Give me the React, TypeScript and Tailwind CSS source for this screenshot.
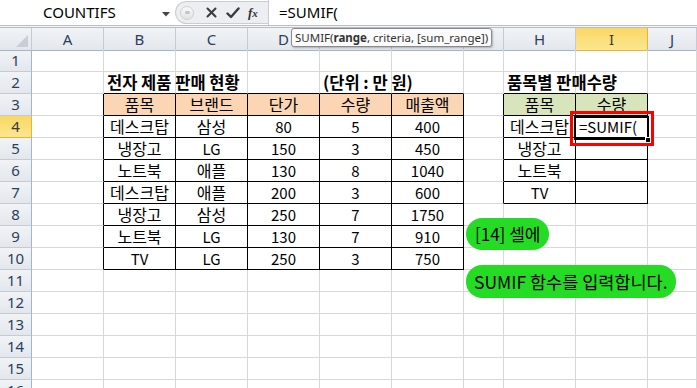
import React from "react";

const FONT = { fontFamily: '"Noto Sans", "Noto Sans CJK KR", sans-serif' };
const KFONT = { fontFamily: '"Noto Sans CJK KR", "Noto Sans", sans-serif' };

const colLetters = ["A", "B", "C", "D", "E", "F", "G", "H", "I", "J"];

type CellData = { text: string; bold?: boolean; align?: "left" | "center"; bg?: string };

const data: Record<string, CellData> = {};
const put = (ref: string, text: string, extra: Partial<CellData> = {}) => {
  data[ref] = { text, align: "center", ...extra };
};

put("B2", "전자 제품 판매 현황", { bold: true, align: "left" });
put("E2", "(단위 : 만 원)", { bold: true, align: "left" });
put("H2", "품목별 판매수량", { bold: true, align: "left" });
const head1 = ["품목", "브랜드", "단가", "수량", "매출액"];
["B", "C", "D", "E", "F"].forEach((c, i) => put(c + "3", head1[i], { bg: "peach" }));
const rows1 = [
  ["데스크탑", "삼성", "80", "5", "400"],
  ["냉장고", "LG", "150", "3", "450"],
  ["노트북", "애플", "130", "8", "1040"],
  ["데스크탑", "애플", "200", "3", "600"],
  ["냉장고", "삼성", "250", "7", "1750"],
  ["노트북", "LG", "130", "7", "910"],
  ["TV", "LG", "250", "3", "750"],
];
rows1.forEach((r, ri) => ["B", "C", "D", "E", "F"].forEach((c, i) => put(c + (ri + 4), r[i])));
put("H3", "품목", { bg: "green" });
put("I3", "수량", { bg: "green" });
["데스크탑", "냉장고", "노트북", "TV"].forEach((t, i) => put("H" + (i + 4), t));
put("I4", "=SUMIF(", { align: "left" });

function inRange(r: number, c: number) {
  if (r >= 3 && r <= 10 && c >= 2 && c <= 6) return true;
  if (r >= 3 && r <= 7 && c >= 8 && c <= 9) return true;
  return false;
}

const hasHangul = (s: string) => /[\uac00-\ud7a3]/.test(s);

function Cell({ r, c }: { r: number; c: number }) {
  const ref = colLetters[c - 1] + r;
  const d = data[ref];
  const rb = inRange(r, c) || inRange(r, c + 1);
  const bb = inRange(r, c) || inRange(r + 1, c);
  const bg = d?.bg === "peach" ? "bg-[#fcd5b4]" : d?.bg === "green" ? "bg-[#d8e4bc]" : "";
  let size = "text-[15px] ";
  if (d) {
    if (d.bold) size = "text-[16.5px] ";
    else if (hasHangul(d.text)) size = "text-[16px] ";
  }
  return (
    <div
      className={
        "relative border-r border-b box-border " +
        (rb ? "border-r-black " : "border-r-[#d8d8d8] ") +
        (bb ? "border-b-black " : "border-b-[#d8d8d8] ") +
        bg
      }
    >
      {d && (
        <div
          className={
            "absolute inset-0 whitespace-nowrap leading-[21px] text-black z-10 " +
            size +
            (d.align === "left" ? "text-left pl-[3px] " : "text-center ") +
            (d.bold ? "font-bold" : "")
          }
          style={KFONT}
        >
          {d.text}
        </div>
      )}
    </div>
  );
}

function RowHeader({ r }: { r: number }) {
  const active = r === 4;
  return (
    <div
      className={
        "border-r border-b box-border text-center text-[15px] leading-[21px] " +
        (active
          ? "bg-gradient-to-b from-[#f9d763] to-[#fde68e] border-r-[#e9b23e] border-b-[#e9b23e] text-[#3a3a3a]"
          : "bg-gradient-to-b from-[#f1f3f6] to-[#e3e7ec] border-r-[#9eb6ce] border-b-[#c5cbd3] text-[#2b3f5c]")
      }
      style={FONT}
    >
      {r}
    </div>
  );
}

export default function App() {
  const rows = Array.from({ length: 16 }, (_, i) => i + 1);
  return (
    <div className="relative w-[697px] h-[388px] overflow-hidden bg-white" style={FONT}>
      {/* formula bar */}
      <div className="flex h-[25px] bg-white">
        <div className="relative w-[175px] flex items-center">
          <span className="ml-[43px] text-[15px] text-black" style={FONT}>
            COUNTIFS
          </span>
          <svg className="absolute left-[162px] top-[12px]" width="8" height="5" viewBox="0 0 8 5">
            <path d="M0 0 L8 0 L4 4.5 Z" fill="#444" />
          </svg>
        </div>
        <div className="relative w-[93px] h-[23px] mt-[1px] bg-[#eceef1] rounded-l-[12px] border-l border-t border-b border-[#c9ccd1] flex items-center">
          <div className="ml-[4px] w-[14px] h-[14px] rounded-full bg-gradient-to-b from-[#fafafa] to-[#e2e2e2] border border-[#d0d0d0] flex items-center justify-center">
            <div className="w-[5px] h-[3px] bg-[#c4c4c4] rounded-sm" />
          </div>
          <svg className="ml-[12px]" width="11" height="11" viewBox="0 0 11 11">
            <path d="M1.5 1.5 L9.5 9.5 M9.5 1.5 L1.5 9.5" stroke="#3b3b3b" strokeWidth="2" strokeLinecap="round" />
          </svg>
          <svg className="ml-[9px]" width="14" height="12" viewBox="0 0 14 12">
            <path d="M1.5 6.5 L5 10 L12.5 1.5" stroke="#3b3b3b" strokeWidth="2.4" fill="none" strokeLinecap="round" strokeLinejoin="round" />
          </svg>
          <span
            className="ml-[8px] text-[13px] italic font-bold text-[#333] leading-none"
            style={{ fontFamily: '"Liberation Serif", serif' }}
          >
            f<span className="text-[11px]">x</span>
          </span>
        </div>
        <div className="flex-1 flex items-center border-l border-[#c9ccd1]">
          <span className="ml-[10px] text-[15px] text-black" style={FONT}>
            =SUMIF(
          </span>
        </div>
      </div>
      <div className="h-[3px] border-t border-b border-[#b9bec6] bg-[#f4f5f7]" />

      {/* sheet */}
      <div className="grid grid-cols-[32px_72px_72px_72px_72px_72px_72px_40px_72px_72px_49px] auto-rows-[22px]">
        <div className="h-[23px] relative bg-gradient-to-b from-[#f1f3f6] to-[#e3e7ec] border-r border-b border-r-[#c5cbd3] border-b-[#9eb6ce] box-border">
          <svg className="absolute right-[3px] bottom-[3px]" width="12" height="12" viewBox="0 0 12 12">
            <path d="M12 0 L12 12 L0 12 Z" fill="#c9ced6" />
          </svg>
        </div>
        {colLetters.map((l) => (
          <div
            key={l}
            className={
              "h-[23px] border-r border-b box-border text-center text-[15px] leading-[22px] " +
              (l === "I"
                ? "bg-gradient-to-b from-[#f9d763] to-[#fde68e] border-r-[#e9b23e] border-b-[#e9b23e] text-[#3a3a3a]"
                : "bg-gradient-to-b from-[#f1f3f6] to-[#e3e7ec] border-r-[#c5cbd3] border-b-[#9eb6ce] text-[#2b3f5c]")
            }
            style={FONT}
          >
            {l}
          </div>
        ))}
        {rows.map((r) => (
          <React.Fragment key={r}>
            <RowHeader r={r} />
            {colLetters.map((_, ci) => (
              <Cell key={ci} r={r} c={ci + 1} />
            ))}
          </React.Fragment>
        ))}
      </div>

      {/* active cell I4 border */}
      <div className="absolute left-[574px] top-[116px] w-[75px] h-[24px] border-2 border-black z-20 pointer-events-none" />
      <div className="absolute left-[645px] top-[137px] w-[6px] h-[6px] bg-black border border-white z-20" />
      {/* red highlight */}
      <div className="absolute left-[570px] top-[111px] w-[84px] h-[35px] border-[3px] border-[#ff0000] z-30" />

      {/* tooltip */}
      <div
        className="absolute left-[291px] top-[28px] h-[19px] px-[3px] bg-[#fbfbfb] border border-[#8a8a8a] rounded-[3px] shadow-[1px_1px_2px_rgba(0,0,0,0.25)] text-[11.5px] leading-[17px] text-[#333] whitespace-nowrap z-30"
        style={FONT}
      >
        SUMIF(<b className="font-bold">range</b>, criteria, [sum_range])
      </div>

      {/* callouts */}
      <div
        className="absolute left-[466px] top-[218px] h-[32px] px-[9px] bg-[#25dc25] rounded-[16px] text-[17px] leading-[32px] text-black whitespace-nowrap z-30"
        style={KFONT}
      >
        [14] 셀에
      </div>
      <div
        className="absolute left-[466px] top-[265px] h-[33px] px-[8px] bg-[#25dc25] rounded-[16px] text-[17.5px] leading-[33px] text-black whitespace-nowrap z-30"
        style={KFONT}
      >
        SUMIF 함수를 입력합니다.
      </div>
    </div>
  );
}
